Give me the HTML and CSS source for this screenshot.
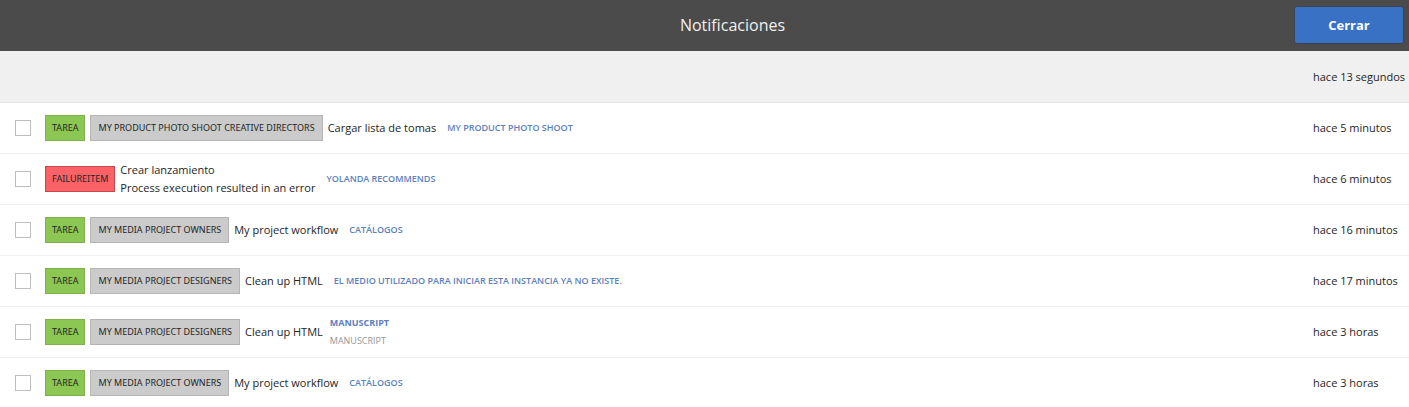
FILE: index.html
```html
<!DOCTYPE html>
<html lang="es">
<head>
<meta charset="utf-8">
<title>Notificaciones</title>
<link rel="stylesheet" href="styles.css">
</head>
<body>
<header class="topbar">
  <h1 class="title">Notificaciones</h1>
  <button class="close" type="button">Cerrar</button>
</header>
<main>
<table class="list">
  <tbody>
    <tr class="row latest">
      <td class="pick"></td>
      <td></td>
      <td class="time">hace 13 segundos</td>
    </tr>
    <tr class="row">
      <td class="pick"><input class="check" type="checkbox" aria-label="Seleccionar Cargar lista de tomas"></td>
      <td><div class="item"><span class="tag task">TAREA</span><span class="tag group">MY PRODUCT PHOTO SHOOT CREATIVE DIRECTORS</span><span class="text">Cargar lista de tomas</span><a class="link" href="#">MY PRODUCT PHOTO SHOOT</a></div></td>
      <td class="time">hace 5 minutos</td>
    </tr>
    <tr class="row">
      <td class="pick"><input class="check" type="checkbox" aria-label="Seleccionar Crear lanzamiento"></td>
      <td><div class="item"><span class="tag failure">FAILUREITEM</span><span class="text">Crear lanzamiento<br>Process execution resulted in an error</span><a class="link" href="#">YOLANDA RECOMMENDS</a></div></td>
      <td class="time">hace 6 minutos</td>
    </tr>
    <tr class="row">
      <td class="pick"><input class="check" type="checkbox" aria-label="Seleccionar My project workflow"></td>
      <td><div class="item"><span class="tag task">TAREA</span><span class="tag group">MY MEDIA PROJECT OWNERS</span><span class="text">My project workflow</span><a class="link" href="#">CATÁLOGOS</a></div></td>
      <td class="time">hace 16 minutos</td>
    </tr>
    <tr class="row">
      <td class="pick"><input class="check" type="checkbox" aria-label="Seleccionar Clean up HTML"></td>
      <td><div class="item"><span class="tag task">TAREA</span><span class="tag group">MY MEDIA PROJECT DESIGNERS</span><span class="text">Clean up HTML</span><a class="link" href="#">EL MEDIO UTILIZADO PARA INICIAR ESTA INSTANCIA YA NO EXISTE.</a></div></td>
      <td class="time">hace 17 minutos</td>
    </tr>
    <tr class="row">
      <td class="pick"><input class="check" type="checkbox" aria-label="Seleccionar Clean up HTML, Manuscript"></td>
      <td><div class="item"><span class="tag task">TAREA</span><span class="tag group">MY MEDIA PROJECT DESIGNERS</span><span class="text">Clean up HTML</span><span class="stack"><a class="link strong" href="#">MANUSCRIPT</a><span class="sub">MANUSCRIPT</span></span></div></td>
      <td class="time">hace 3 horas</td>
    </tr>
    <tr class="row">
      <td class="pick"><input class="check" type="checkbox" aria-label="Seleccionar My project workflow, Catálogos"></td>
      <td><div class="item"><span class="tag task">TAREA</span><span class="tag group">MY MEDIA PROJECT OWNERS</span><span class="text">My project workflow</span><a class="link" href="#">CATÁLOGOS</a></div></td>
      <td class="time">hace 3 horas</td>
    </tr>
  </tbody>
</table>
</main>
</body>
</html>
```
FILE: styles.css
```css
* { box-sizing: border-box; }
body {
  margin: 0;
  background: #fff;
  color: #252525;
  font: 11px/18px "Open Sans", "Noto Sans", sans-serif;
}
.topbar {
  display: grid;
  grid-template-columns: 1fr auto 1fr;
  align-items: center;
  height: 51px;
  padding: 0 5px 2px 61px;
  background: #4b4b4b;
}
.title {
  grid-column: 2;
  margin: 0;
  color: #f0f0f0;
  font-size: 16px;
  font-weight: 400;
  line-height: 24px;
}
.close {
  justify-self: end;
  width: 110px;
  height: 38px;
  border: 1px solid #3b4450;
  border-radius: 3px;
  background: #3971c5;
  color: #fff;
  font: 700 13px/20px "Open Sans", "Noto Sans", sans-serif;
}
.list { width: 100%; border-spacing: 0; }
.row td {
  height: 51px;
  padding: 0;
  border-bottom: 1px solid #f0f0f0;
  vertical-align: middle;
}
.row.latest td {
  height: 52px;
  border-bottom-color: #e4e4e4;
  background: #f0f0f0;
}
.row:last-child td { height: 49px; border-bottom: 0; }
.row .pick { width: 45px; padding-left: 15px; }
.row .time { width: 96px; white-space: nowrap; }
.check {
  display: block;
  appearance: none;
  width: 16px;
  height: 16px;
  margin: 0;
  border: 1px solid #bebebe;
  background: #fff;
}
.item { display: flex; align-items: center; }
.tag {
  height: 26px;
  margin-right: 5px;
  padding: 0 6px;
  border: 1px solid;
  font-family: "Noto Sans", "Open Sans", sans-serif;
  font-size: 9px;
  line-height: 24px;
  white-space: nowrap;
}
.task { border-color: #7eb04d; background: #8cc653; }
.group { padding: 0 7px; border-color: #b5b5b5; background: #cbcbcb; }
.failure { border-color: #c9474b; background: #fa6268; }
.text { margin-right: 11px; }
.link {
  color: #5c80bd;
  font-size: 9px;
  font-weight: 600;
  text-decoration: none;
}
.stack { display: flex; flex-direction: column; margin-left: -4px; }
.strong { font-weight: 700; }
.sub { color: #969696; font-size: 9px; }
```
